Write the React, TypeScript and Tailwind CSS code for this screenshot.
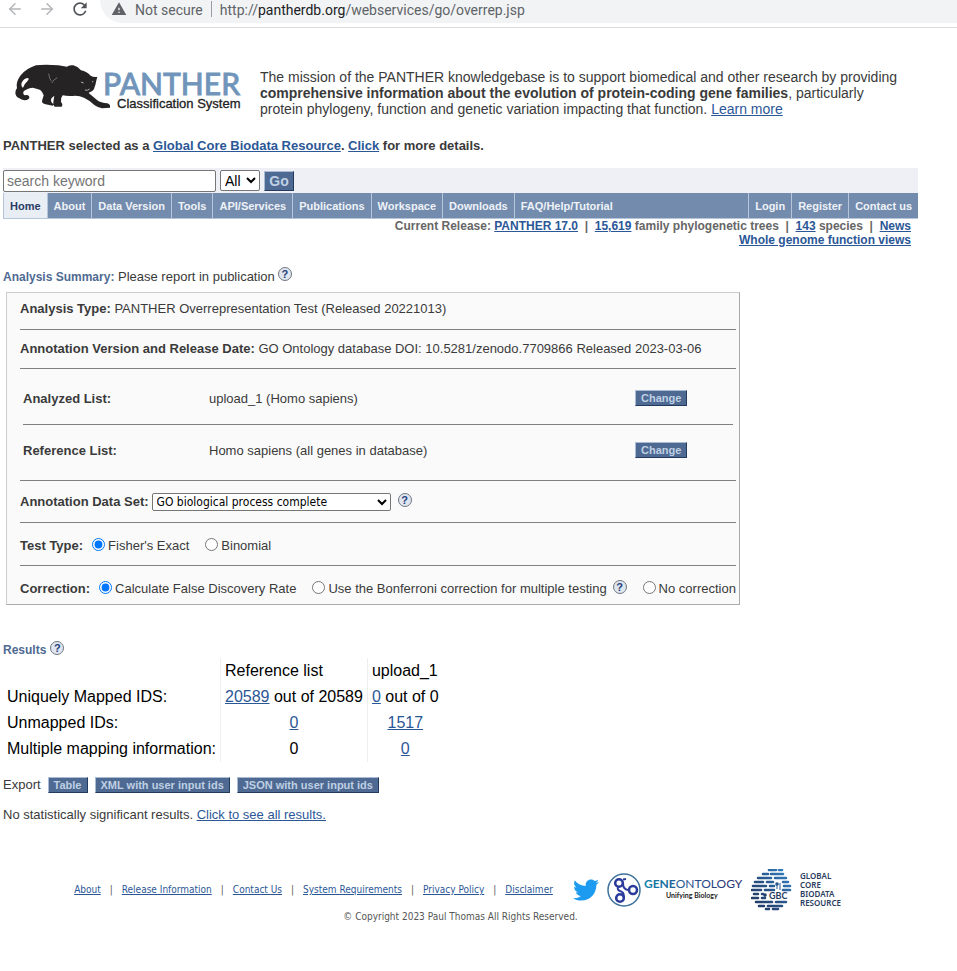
import type { ReactNode } from "react";
import { ArrowLeft, ArrowRight } from "lucide-react";
import { MdRefresh, MdWarning } from "react-icons/md";
import { FaTwitter } from "react-icons/fa";

function Link({ children }: { children: ReactNode }) {
  return (
    <a href="#" className="text-[#2b5797] underline">
      {children}
    </a>
  );
}

function Help() {
  return (
    <button
      type="button"
      aria-label="Help"
      className="flex size-3.5 shrink-0 items-center justify-center rounded-full border border-[#707781] bg-[#dfe6f0] text-[11px] leading-none font-bold text-[#26407a]"
    >
      ?
    </button>
  );
}

function SmallButton({ children }: { children: ReactNode }) {
  return (
    <button
      type="button"
      className="h-4 border border-t-[#a9bcd3] border-r-[#223a5e] border-b-[#223a5e] border-l-[#a9bcd3] bg-[#4f6a92] px-[5px] text-[11px] leading-none font-bold text-[#bfd0e4]"
    >
      {children}
    </button>
  );
}

function Radio({ name, label, checked }: { name: string; label: string; checked?: boolean }) {
  return (
    <label className="flex items-center gap-[3px]">
      <input type="radio" name={name} defaultChecked={checked} className="mb-[3px] size-[13px]" />
      {label}
    </label>
  );
}

function PantherLogo() {
  return (
    <svg viewBox="0 0 240 55" className="h-[55px] w-60 shrink-0" role="img" aria-label="PANTHER Classification System">
      <g transform="scale(0.3333)">
        <path
          fill="#262324"
          d="M262 50 L258 66 Q257 74 254 80 Q253 91 240 96 L236 99 L262 121 Q272 129 292 130 Q302 133 300 143 L276 145 Q266 144 254 136 Q238 120 222 113 Q206 106 188 108 Q170 109 158 106 Q151 114 153 126 Q160 133 155 140 L134 140 Q128 134 131 119 L133 107 L126 113 Q120 119 126 129 L132 133 L128 137 L107 133 Q95 130 96 123 L101 106 Q98 96 91 90 Q79 86 68 83 Q48 86 41 94 Q37 103 45 106 Q52 103 57 108 Q61 117 50 120 Q35 122 28 115 Q18 112 16 100 Q15 90 21 85 Q16 68 31 47 Q47 26 78 16 Q105 13 145 16 L171 20 Q177 14 190 16 Q203 19 213 31 Q231 35 242 47 Q252 53 262 50 Z"
        />
        <path fill="#fff" d="M55 54 Q58 58 52 64 Q43 72 39 83 Q32 79 35 68 Q41 54 55 54 Z" />
        <path fill="none" stroke="#999" strokeWidth="2" d="M116 41 Q118 57 124 63 M142 53 Q131 58 125 69" />
        <path fill="none" stroke="#ccc" strokeWidth="2.5" d="M213 66 L221 69 M246 66 L250 64 M225 90 Q233 93 239 87" />
      </g>
      <text
        x="93"
        y="35"
        stroke="#7195ba"
        strokeWidth="0.8"
        className="fill-[#7195ba] font-['Lato',sans-serif] text-[30px] font-medium"
      >
        PANTHER
      </text>
      <text x="107" y="48" className="fill-[#222] font-['Liberation_Sans',Arial,sans-serif] text-[13px]" stroke="#222" strokeWidth="0.3">
        Classification System
      </text>
    </svg>
  );
}

function GeneOntologyLogo() {
  return (
    <svg viewBox="0 0 136 36" className="h-9 w-[136px] shrink-0" role="img" aria-label="Gene Ontology, Unifying Biology">
      <defs>
        <linearGradient id="gene" x1="0" x2="1">
          <stop offset="0" stopColor="#1684ac" />
          <stop offset="0.45" stopColor="#26518e" />
          <stop offset="1" stopColor="#282c6d" />
        </linearGradient>
      </defs>
      <circle cx="17" cy="18" r="16" fill="#fff" stroke="#3d7199" strokeWidth="1.5" />
      <g fill="none" stroke="#2b3b9b" strokeWidth="2.6">
        <circle cx="12" cy="11" r="3.8" />
        <circle cx="13" cy="26" r="3.8" />
        <circle cx="26" cy="18" r="4" />
        <path strokeWidth="2" d="M16 7.5 L19 7 M16 11 Q16 18 22 18 M11 15 Q10 18 13 19 Q17 20 17 25" />
      </g>
      <text x="37" y="16" fill="url(#gene)" className="font-['Lato',sans-serif] text-[12px]">
        <tspan className="font-bold">GENE</tspan>ONTOLOGY
      </text>
      <text x="59" y="26" className="fill-[#222] font-['Lato',sans-serif] text-[7px] font-bold">
        Unifying Biology
      </text>
    </svg>
  );
}

const stripes = [
  [18, 1, 7], [28, 1, 3],
  [12, 5, 5], [20, 5, 12],
  [7, 9, 13], [24, 9, 11],
  [4, 13, 8], [16, 13, 6], [32, 13, 5],
  [2, 17, 13], [19, 17, 4], [33, 17, 6],
  [1, 21, 9], [14, 21, 9], [32, 21, 7],
  [3, 25, 4], [11, 25, 1],
  [1, 29, 6], [11, 29, 3],
  [5, 33, 16], [25, 33, 10],
  [8, 37, 5], [17, 37, 14],
  [15, 40, 3], [22, 40, 5],
];

function BiodataLogo() {
  return (
    <svg viewBox="0 0 96 42" className="h-[42px] w-24 shrink-0" role="img" aria-label="Global Core Biodata Resource">
      <defs>
        <linearGradient id="core" gradientUnits="userSpaceOnUse" x1="0" y1="38" x2="38" y2="4">
          <stop offset="0" stopColor="#20355f" />
          <stop offset="0.5" stopColor="#285488" />
          <stop offset="1" stopColor="#327fc1" />
        </linearGradient>
      </defs>
      <g stroke="url(#core)" strokeWidth="2.6" strokeLinecap="round">
        {stripes.map(([x, y, w]) => (
          <path key={`${x}-${y}`} d={`M${x} ${y} L${x + w} ${y + 0.01}`} />
        ))}
      </g>
      <path fill="none" stroke="#27578d" d="M26 15 V20 M29 14 V21 M14 25 V30" />
      <circle cx="26" cy="15" r="1.8" fill="#27578d" />
      <circle cx="14" cy="26" r="1.8" fill="#203e6e" />
      <text x="18" y="30" className="fill-[#253c62] font-['Lato',sans-serif] text-[9px] font-bold">GBC</text>
      <g className="fill-[#2a3d60] font-['Noto_Sans',sans-serif] text-[8px] font-semibold">
        <text x="49" y="10">GLOBAL</text>
        <text x="49" y="19">CORE</text>
        <text x="49" y="28">BIODATA</text>
        <text x="49" y="37">RESOURCE</text>
      </g>
    </svg>
  );
}

const leftTabs = ["Home", "About", "Data Version", "Tools", "API/Services", "Publications", "Workspace", "Downloads", "FAQ/Help/Tutorial"];
const rightTabs = ["Login", "Register", "Contact us"];
const footerLinks = ["About", "Release Information", "Contact Us", "System Requirements", "Privacy Policy", "Disclaimer"];

export default function App() {
  return (
    <div className="bg-white font-['Liberation_Sans',Arial,sans-serif] text-[13px] leading-4 text-[#3a3a3a]">
      <header className="flex h-7 items-start border-b border-[#dadce0] font-['Roboto',sans-serif] text-sm text-[#5f6368]">
        <div className="flex h-[18px] items-center gap-3.5 pl-1.5">
          <button type="button" aria-label="Back"><ArrowLeft className="size-[18px] text-[#b4b6b9]" /></button>
          <button type="button" aria-label="Forward"><ArrowRight className="size-[18px] text-[#b4b6b9]" /></button>
          <button type="button" aria-label="Reload"><MdRefresh className="size-5 text-[#505357]" /></button>
        </div>
        <div className="ml-2.5 flex h-[23px] flex-1 items-start rounded-bl-full bg-[#f1f3f4] pl-[11px]">
          <MdWarning className="mt-px size-4" />
          <span className="ml-2 leading-5">Not secure</span>
          <span className="mx-2 mt-px h-4 w-px bg-[#9a9da1]" />
          <span className="leading-5">http://<span className="text-[#202124]">pantherdb.org</span>/webservices/go/overrep.jsp</span>
        </div>
      </header>

      <main className="mr-[39px] ml-[3px]">
        <div className="flex pt-8">
          <div className="pl-[7px]"><PantherLogo /></div>
          <p className="ml-2.5 max-w-[650px] pt-[9px] text-sm leading-4">
            The mission of the PANTHER knowledgebase is to support biomedical and other research by providing{" "}
            <b>comprehensive information about the evolution of protein-coding gene families</b>, particularly protein
            phylogeny, function and genetic variation impacting that function. <Link>Learn more</Link>
          </p>
        </div>
        <p className="mt-[21px] font-bold">
          PANTHER selected as a <Link>Global Core Biodata Resource</Link>. <Link>Click</Link> for more details.
        </p>

        <form className="mt-3.5 flex h-[25px] items-center bg-[#eff0f5]">
          <input
            aria-label="Search keyword"
            placeholder="search keyword"
            className="h-[22px] w-[213px] rounded-xs border border-[#767676] bg-white px-[3px] text-sm placeholder:text-[#757575]"
          />
          <select aria-label="Search scope" className="ml-1 h-[21px] w-10 rounded-xs border border-[#767676] bg-white text-sm text-black">
            <option>All</option>
          </select>
          <button
            type="button"
            className="ml-1 h-5 w-[30px] border border-t-[#a9bcd3] border-r-[#223a5e] border-b-[#223a5e] border-l-[#a9bcd3] bg-[#4f6a92] text-sm leading-none font-bold text-[#bfd0e4]"
          >
            Go
          </button>
        </form>

        <nav className="flex h-[26px] justify-between border-b border-[#b7c5da] bg-[#738bad] text-[11px] leading-[26px] font-bold text-[#eef2f8]">
          <div className="flex">
            {leftTabs.map((tab) => (
              <a
                key={tab}
                href="#"
                className={tab === "Home" ? "border-l border-[#b7c5da] bg-[#e9edf4] px-1.5 text-[#2b3b66]" : "border-l border-[#b7c5da] px-1.5"}
              >
                {tab}
              </a>
            ))}
          </div>
          <div className="flex">
            {rightTabs.map((tab) => (
              <a key={tab} href="#" className="border-l border-[#b7c5da] px-1.5">{tab}</a>
            ))}
          </div>
        </nav>
        <div className="pr-[7px] text-right text-xs leading-[14px] font-bold text-[#666]">
          <p>
            Current Release: <Link>PANTHER 17.0</Link>&nbsp; |&nbsp; <Link>15,619</Link> family phylogenetic trees&nbsp; |&nbsp;{" "}
            <Link>143</Link> species&nbsp; |&nbsp; <Link>News</Link>
          </p>
          <p><Link>Whole genome function views</Link></p>
        </div>

        <div className="mt-5 flex items-start gap-[3px]">
          <h1 className="pt-0.5"><b className="text-xs text-[#4f6a92]">Analysis Summary:</b> Please report in publication</h1>
          <Help />
        </div>

        <section className="mt-[7px] ml-[3px] w-[734px] border border-t-[#ccc] border-r-[#aaa] border-b-[#aaa] border-l-[#ccc] bg-[#fafafa] pr-[3px] pl-[13px]">
          <p className="border-b border-[#808080] pt-2 pb-3"><b>Analysis Type:</b> PANTHER Overrepresentation Test (Released 20221013)</p>
          <p className="border-b border-[#808080] pt-[11px] pb-[11px]">
            <b>Annotation Version and Release Date:</b> GO Ontology database DOI: 10.5281/zenodo.7709866 Released 2023-03-06
          </p>
          <div className="mx-[3px] flex items-center border-b border-[#808080] pt-[21px] pb-4">
            <b className="w-[186px]">Analyzed List:</b>
            <span className="w-[426px]">upload_1 (Homo sapiens)</span>
            <div className="flex pb-0.5"><SmallButton>Change</SmallButton></div>
          </div>
          <div className="border-b border-[#808080]">
            <div className="mx-[3px] flex items-center pt-[17px] pb-5">
              <b className="w-[186px]">Reference List:</b>
              <span className="w-[426px]">Homo sapiens (all genes in database)</span>
              <div className="flex pb-0.5"><SmallButton>Change</SmallButton></div>
            </div>
          </div>
          <div className="flex items-center border-b border-[#808080] pt-3 pb-[11px]">
            <label htmlFor="dataset" className="mr-[3px] font-bold">Annotation Data Set:</label>
            <select
              id="dataset"
              className="h-[18px] w-[239px] rounded-xs border border-[#767676] bg-white font-['DejaVu_Sans_Condensed','DejaVu_Sans',sans-serif] text-xs leading-4 text-black"
            >
              <option>GO biological process complete</option>
            </select>
            <div className="mb-1 ml-[7px]"><Help /></div>
          </div>
          <fieldset className="flex items-center border-b border-[#808080] pt-[15px] pb-[11px]">
            <b className="mr-[9px]">Test Type:</b>
            <Radio name="test" label="Fisher's Exact" checked />
            <span className="w-4" />
            <Radio name="test" label="Binomial" />
          </fieldset>
          <fieldset className="flex items-center pt-3.5 pb-1.5 whitespace-nowrap">
            <b className="mr-[9px]">Correction:</b>
            <Radio name="correction" label="Calculate False Discovery Rate" checked />
            <span className="w-4 shrink-0" />
            <Radio name="correction" label="Use the Bonferroni correction for multiple testing" />
            <div className="mb-1 ml-1.5"><Help /></div>
            <span className="w-4 shrink-0" />
            <Radio name="correction" label="No correction" />
          </fieldset>
        </section>

        <div className="mt-9 flex items-start gap-1">
          <h2 className="pt-px text-xs leading-4 font-bold text-[#4f6a92]">Results</h2>
          <Help />
        </div>
        <table className="text-base leading-[18px] text-black">
          <thead>
            <tr>
              <td className="p-1" />
              <th scope="col" className="border-l border-[#eee] p-1 text-left font-normal">Reference list</th>
              <th scope="col" className="border-l border-[#eee] p-1 text-left font-normal">upload_1</th>
            </tr>
          </thead>
          <tbody>
            <tr>
              <th scope="row" className="p-1 text-left font-normal">Uniquely Mapped IDS:</th>
              <td className="border-l border-[#eee] p-1"><Link>20589</Link> out of 20589</td>
              <td className="border-l border-[#eee] p-1"><Link>0</Link> out of 0</td>
            </tr>
            <tr>
              <th scope="row" className="p-1 text-left font-normal">Unmapped IDs:</th>
              <td className="border-l border-[#eee] p-1 text-center"><Link>0</Link></td>
              <td className="border-l border-[#eee] p-1 text-center"><Link>1517</Link></td>
            </tr>
            <tr>
              <th scope="row" className="p-1 text-left font-normal">Multiple mapping information:</th>
              <td className="border-l border-[#eee] p-1 text-center">0</td>
              <td className="border-l border-[#eee] p-1 text-center"><Link>0</Link></td>
            </tr>
          </tbody>
        </table>
        <div className="mt-[15px] flex items-center gap-[7px]">
          <span>Export</span>
          <SmallButton>Table</SmallButton>
          <SmallButton>XML with user input ids</SmallButton>
          <SmallButton>JSON with user input ids</SmallButton>
        </div>
        <p className="mt-3.5">No statistically significant results. <Link>Click to see all results.</Link></p>

        <footer className="mt-[46px] font-['DejaVu_Sans_Condensed','DejaVu_Sans',sans-serif] text-[10px] leading-3 text-[#555]">
          <div className="flex items-center justify-center">
            <ul className="flex">
              {footerLinks.map((text, i) => (
                <li key={text} className="flex">
                  {i > 0 && <span className="mx-[9px]">|</span>}
                  <Link>{text}</Link>
                </li>
              ))}
            </ul>
            <a href="#" aria-label="Twitter" className="ml-5"><FaTwitter className="size-[26px] text-[#1d9bf0]" /></a>
            <a href="#" className="ml-2"><GeneOntologyLogo /></a>
            <a href="#" className="ml-2"><BiodataLogo /></a>
          </div>
          <p className="text-center">© Copyright 2023 Paul Thomas All Rights Reserved.</p>
        </footer>
      </main>
    </div>
  );
}
